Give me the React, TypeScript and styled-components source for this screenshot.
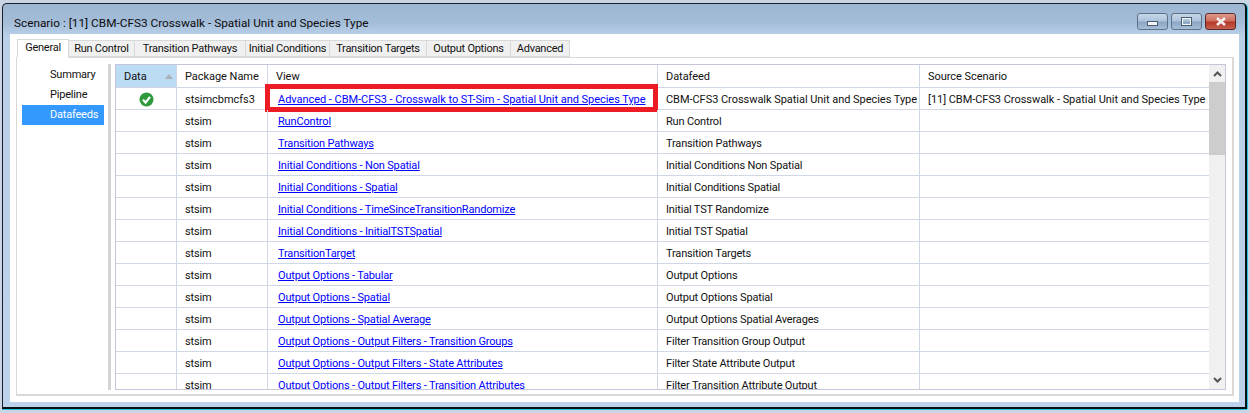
import React from 'react';
import styled, { createGlobalStyle } from 'styled-components';

const GlobalStyle = createGlobalStyle`
  html, body {
    margin: 0;
    padding: 0;
    background: #c9d5e4;
    overflow: hidden;
  }
  body {
    font-family: Roboto, "Liberation Sans", Arial, sans-serif;
    font-size: 11px;
    letter-spacing: -0.04px;
    color: #111;
  }
`;

const Screen = styled.div`
  width: 1250px;
  height: 413px;
  padding: 3px 3px 4px 2px;
  box-sizing: border-box;
`;

const Window = styled.div`
  height: 100%;
  box-sizing: border-box;
  border: 1px solid #1a1f28;
  border-bottom: 2px solid #0b1016;
  border-right: 2px solid #0b1016;
  box-shadow: 0 1px 0 #27c5dc, 1px 0 0 #27c5dc;
  border-radius: 5px 5px 0 0;
  background: linear-gradient(180deg, #9db6d2 0px, #a3bcd8 18px, #b9d0e8 32px, #bcd2ea 100%);
  padding: 0 6px 5px 7px;
  display: flex;
  flex-direction: column;
`;

const TitleBar = styled.div`
  height: 30px;
  flex: none;
  display: flex;
  align-items: center;
  justify-content: space-between;
`;

const Title = styled.div`
  font-size: 11.8px;
  letter-spacing: 0;
  color: #0c0c0c;
  padding: 8px 0 0 4px;
`;

const Controls = styled.div`
  display: flex;
  gap: 3px;
  margin-right: 3px;
  padding-top: 5px;
`;

const WinButton = styled.div<{ $close?: boolean }>`
  width: 29px;
  height: 15px;
  border: 1px solid ${(p) => (p.$close ? '#5c2a2a' : '#5f7287')};
  border-radius: 3px;
  display: flex;
  align-items: center;
  justify-content: center;
  background: ${(p) =>
    p.$close
      ? 'linear-gradient(180deg, #dc9a8c 0%, #cf6f5e 45%, #b5382a 55%, #c4604f 100%)'
      : 'linear-gradient(180deg, #c6d6e8 0%, #aec4dc 45%, #8ba6c3 55%, #a6bdd6 100%)'};
`;

const MinGlyph = styled.svg`
  margin-top: 3px;
`;

const Client = styled.div`
  flex: 1;
  min-height: 0;
  background: #fff;
  padding: 5px 5px 6px 6px;
  display: flex;
  flex-direction: column;
`;

const TabStrip = styled.div`
  display: flex;
  height: 18px;
  flex: none;
  padding-left: 1px;
  align-items: flex-end;
`;

const Tab = styled.div<{ $active?: boolean; $w: number }>`
  width: ${(p) => p.$w}px;
  height: ${(p) => (p.$active ? '19px' : '17px')};
  margin-bottom: ${(p) => (p.$active ? '-1px' : '0')};
  box-sizing: border-box;
  border: 1px solid #d9d9d9;
  border-bottom: ${(p) => (p.$active ? '1px solid #fff' : '1px solid #d9d9d9')};
  border-left-width: ${(p) => (p.$active ? '1px' : '0')};
  background: ${(p) => (p.$active ? '#fff' : '#f0f0f0')};
  text-align: center;
  line-height: 16px;
  letter-spacing: -0.25px;
  white-space: nowrap;
  position: relative;
  z-index: ${(p) => (p.$active ? 1 : 0)};
`;

const TabPanel = styled.div`
  flex: 1;
  min-height: 0;
  border: 1px solid #d9d9d9;
  border-bottom-width: 2px;
  border-right-width: 2px;
  padding: 6px 6px 4px 5px;
  display: flex;
`;

const SideList = styled.div`
  width: 82px;
  flex: none;
  padding-top: 1px;
`;

const SideItem = styled.div<{ $active?: boolean }>`
  height: 20px;
  line-height: 19px;
  padding-left: 28px;
  letter-spacing: -0.2px;
  background: ${(p) => (p.$active ? '#3399ff' : 'transparent')};
  color: ${(p) => (p.$active ? '#fff' : '#111')};
`;

const Splitter = styled.div`
  width: 3px;
  flex: none;
  margin: 0 4px 0 4px;
  background: #d4d4d4;
`;

const GridFrame = styled.div`
  flex: 1;
  min-width: 0;
  border: 1px solid #c5c5dc;
  display: flex;
  overflow: hidden;
`;

const GridBody = styled.div`
  flex: 1;
  min-width: 0;
  overflow: hidden;
`;

const columns = '61px 91px 390px 262px 1fr';

const HeaderRow = styled.div`
  display: grid;
  grid-template-columns: ${columns};
  height: 23px;
  border-bottom: 1px solid #d0d7e5;
  box-sizing: border-box;
  white-space: nowrap;
`;

const HeaderCell = styled.div<{ $sorted?: boolean }>`
  display: flex;
  align-items: center;
  justify-content: space-between;
  padding: 0 8px;
  box-sizing: border-box;
  border-right: 1px solid #d0d7e5;
  background: ${(p) => (p.$sorted ? '#bcdcf4' : '#fff')};
  &:last-child {
    border-right: none;
  }
`;

const SortArrow = styled.span`
  width: 0;
  height: 0;
  border-left: 4.5px solid transparent;
  border-right: 4.5px solid transparent;
  border-bottom: 5px solid #a9b2ba;
  margin-right: -5px;
`;

const Row = styled.div<{ $loose?: boolean }>`
  display: grid;
  grid-template-columns: ${columns};
  height: 22px;
  box-sizing: border-box;
  border-bottom: 1px solid #d0d7e5;
  letter-spacing: ${(p) => (p.$loose ? '-0.04px' : '-0.17px')};
`;

const Cell = styled.div`
  position: relative;
  padding: 1px 8px 0;
  line-height: 21px;
  white-space: nowrap;
  box-sizing: border-box;
  border-right: 1px solid #d0d7e5;
  &:last-child {
    border-right: none;
  }
`;

const IconCell = styled(Cell)`
  display: flex;
  align-items: center;
  justify-content: center;
  padding: 0;
`;

const ViewLink = styled.a`
  color: #0000ff;
  text-decoration: underline;
  padding-left: 2px;
`;

const Highlight = styled.div`
  position: absolute;
  left: -3px;
  top: -4px;
  width: 393px;
  height: 28px;
  box-sizing: border-box;
  border: 5px solid #ed1c24;
  pointer-events: none;
`;

const ScrollBar = styled.div`
  width: 16px;
  flex: none;
  background: #f0f0f0;
  display: flex;
  flex-direction: column;
  align-items: center;
`;

const ScrollArrow = styled.div`
  height: 17px;
  flex: none;
  display: flex;
  align-items: center;
  justify-content: center;
`;

const ScrollTrack = styled.div`
  flex: 1;
  width: 100%;
`;

const ScrollThumb = styled.div`
  width: 100%;
  height: 73px;
  background: #cdcdcd;
`;

const tabs: [string, number][] = [
  ['General', 52],
  ['Run Control', 66],
  ['Transition Pathways', 111],
  ['Initial Conditions', 84],
  ['Transition Targets', 97],
  ['Output Options', 84],
  ['Advanced', 59],
];

const rows = [
  ['stsimcbmcfs3', 'Advanced - CBM-CFS3 - Crosswalk to ST-Sim - Spatial Unit and Species Type', 'CBM-CFS3 Crosswalk Spatial Unit and Species Type', '[11] CBM-CFS3 Crosswalk - Spatial Unit and Species Type'],
  ['stsim', 'RunControl', 'Run Control', ''],
  ['stsim', 'Transition Pathways', 'Transition Pathways', ''],
  ['stsim', 'Initial Conditions - Non Spatial', 'Initial Conditions Non Spatial', ''],
  ['stsim', 'Initial Conditions - Spatial', 'Initial Conditions Spatial', ''],
  ['stsim', 'Initial Conditions - TimeSinceTransitionRandomize', 'Initial TST Randomize', ''],
  ['stsim', 'Initial Conditions - InitialTSTSpatial', 'Initial TST Spatial', ''],
  ['stsim', 'TransitionTarget', 'Transition Targets', ''],
  ['stsim', 'Output Options - Tabular', 'Output Options', ''],
  ['stsim', 'Output Options - Spatial', 'Output Options Spatial', ''],
  ['stsim', 'Output Options - Spatial Average', 'Output Options Spatial Averages', ''],
  ['stsim', 'Output Options - Output Filters - Transition Groups', 'Filter Transition Group Output', ''],
  ['stsim', 'Output Options - Output Filters - State Attributes', 'Filter State Attribute Output', ''],
  ['stsim', 'Output Options - Output Filters - Transition Attributes', 'Filter Transition Attribute Output', ''],
];

function CheckIcon() {
  return (
    <svg width="15" height="15" viewBox="0 0 15 15">
      <circle cx="7.5" cy="7.5" r="7" fill="#2f9a3c" />
      <path d="M4 7.8 L6.6 10.6 L11 4.8" fill="none" stroke="#fff" strokeWidth="2.2" />
    </svg>
  );
}

function Chevron({ down }: { down?: boolean }) {
  return (
    <svg width="9" height="7" viewBox="0 0 9 7">
      <path d={down ? 'M1 1 L4.5 4.5 L8 1' : 'M1 6 L4.5 2.5 L8 6'} fill="none" stroke="#555" strokeWidth="2" />
    </svg>
  );
}

function App() {
  return (
    <Screen>
      <GlobalStyle />
      <Window>
        <TitleBar>
          <Title>Scenario : [11] CBM-CFS3 Crosswalk - Spatial Unit and Species Type</Title>
          <Controls>
            <WinButton>
              <MinGlyph width="11" height="5" viewBox="0 0 11 5">
                <rect x="0.5" y="0.5" width="10" height="4" fill="#f2f5f8" stroke="#4c5d70" />
              </MinGlyph>
            </WinButton>
            <WinButton>
              <svg width="11" height="9" viewBox="0 0 11 9">
                <rect x="1" y="1" width="9" height="7" fill="none" stroke="#f2f5f8" strokeWidth="2" />
                <rect x="0.5" y="0.5" width="10" height="8" fill="none" stroke="#4c5d70" />
              </svg>
            </WinButton>
            <WinButton $close>
              <svg width="12" height="9" viewBox="0 0 12 9">
                <path d="M2 1 L10 8 M10 1 L2 8" stroke="#f4efee" strokeWidth="2.6" />
              </svg>
            </WinButton>
          </Controls>
        </TitleBar>
        <Client>
          <TabStrip>
            {tabs.map(([t, w], i) => (
              <Tab key={t} $active={i === 0} $w={w}>{t}</Tab>
            ))}
          </TabStrip>
          <TabPanel>
            <SideList>
              <SideItem>Summary</SideItem>
              <SideItem>Pipeline</SideItem>
              <SideItem $active>Datafeeds</SideItem>
            </SideList>
            <Splitter />
            <GridFrame>
              <GridBody>
                <HeaderRow>
                  <HeaderCell $sorted>Data<SortArrow /></HeaderCell>
                  <HeaderCell>Package Name</HeaderCell>
                  <HeaderCell>View</HeaderCell>
                  <HeaderCell>Datafeed</HeaderCell>
                  <HeaderCell>Source Scenario</HeaderCell>
                </HeaderRow>
                {rows.map((r, i) => (
                  <Row key={r[1]} $loose={i === 0}>
                    <IconCell>{i === 0 && <CheckIcon />}</IconCell>
                    <Cell>{r[0]}</Cell>
                    <Cell>
                      <ViewLink>{r[1]}</ViewLink>
                      {i === 0 && <Highlight />}
                    </Cell>
                    <Cell>{r[2]}</Cell>
                    <Cell>{r[3]}</Cell>
                  </Row>
                ))}
              </GridBody>
              <ScrollBar>
                <ScrollArrow><Chevron /></ScrollArrow>
                <ScrollThumb />
                <ScrollTrack />
                <ScrollArrow><Chevron down /></ScrollArrow>
              </ScrollBar>
            </GridFrame>
          </TabPanel>
        </Client>
      </Window>
    </Screen>
  );
}

export default App;
